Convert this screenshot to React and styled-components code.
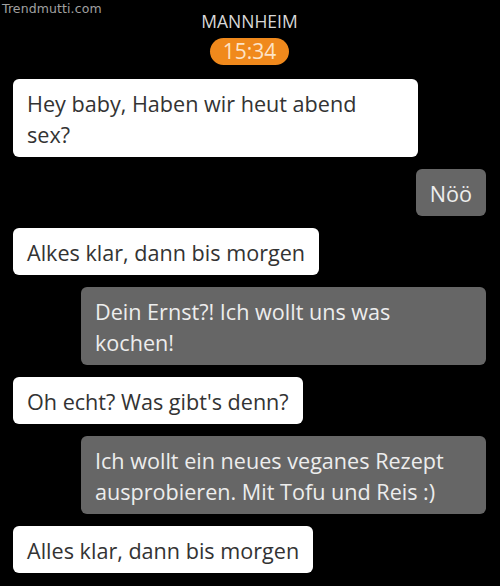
import React from "react";
import styled, { createGlobalStyle } from "styled-components";

const Global = createGlobalStyle`
  html, body { margin: 0; padding: 0; background: #000; }
  body { font-family: "Open Sans", "Noto Sans", sans-serif; }
`;

const Screen = styled.div`
  position: relative;
  width: 500px;
  height: 586px;
  background: #000;
  box-sizing: border-box;
  padding: 9px 14px 0 13px;
  overflow: hidden;
`;

const Watermark = styled.div`
  position: absolute;
  left: 2px;
  top: 0;
  font-family: "DejaVu Sans", sans-serif;
  font-size: 12.5px;
  line-height: 17px;
  color: #a0a0a0;
  letter-spacing: 0.1px;
`;

const Header = styled.header`
  display: flex;
  flex-direction: column;
  align-items: center;
  gap: 5px;
  margin-bottom: 14px;
`;

const City = styled.div`
  font-size: 17.5px;
  line-height: 24px;
  color: #d8d8d8;
`;

const TimePill = styled.div`
  background: #f0891c;
  color: #fde3c6;
  font-size: 21px;
  line-height: 27px;
  padding: 0 13px;
  border-radius: 14px;
`;

const Thread = styled.div`
  display: flex;
  flex-direction: column;
  gap: 12px;
`;

const Bubble = styled.div`
  align-self: ${(p) => (p.$mine ? "flex-end" : "flex-start")};
  background: ${(p) => (p.$mine ? "#666666" : "#ffffff")};
  color: ${(p) => (p.$mine ? "#ededed" : "#333333")};
  width: ${(p) => (p.$wide ? "405px" : "auto")};
  max-width: 405px;
  box-sizing: border-box;
  padding: 9px 14px 7px 14px;
  border-radius: 6px;
  font-size: 21.6px;
  line-height: 31px;
  white-space: nowrap;
`;

const messages = [
  { mine: false, wide: true, lines: ["Hey baby, Haben wir heut abend", "sex?"] },
  { mine: true, lines: ["Nöö"] },
  { mine: false, lines: ["Alkes klar, dann bis morgen"] },
  { mine: true, wide: true, lines: ["Dein Ernst?! Ich wollt uns was", "kochen!"] },
  { mine: false, lines: ["Oh echt? Was gibt's denn?"] },
  {
    mine: true,
    wide: true,
    lines: ["Ich wollt ein neues veganes Rezept", "ausprobieren. Mit Tofu und Reis :)"],
  },
  { mine: false, lines: ["Alles klar, dann bis morgen"] },
];

export default function App() {
  return (
    <>
      <Global />
      <Screen>
        <Watermark>Trendmutti.com</Watermark>
        <Header>
          <City>MANNHEIM</City>
          <TimePill>15:34</TimePill>
        </Header>
        <Thread>
          {messages.map((m, i) => (
            <Bubble key={i} $mine={m.mine} $wide={m.wide}>
              {m.lines.map((l, j) => (
                <React.Fragment key={j}>
                  {j > 0 && <br />}
                  {l}
                </React.Fragment>
              ))}
            </Bubble>
          ))}
        </Thread>
      </Screen>
    </>
  );
}
